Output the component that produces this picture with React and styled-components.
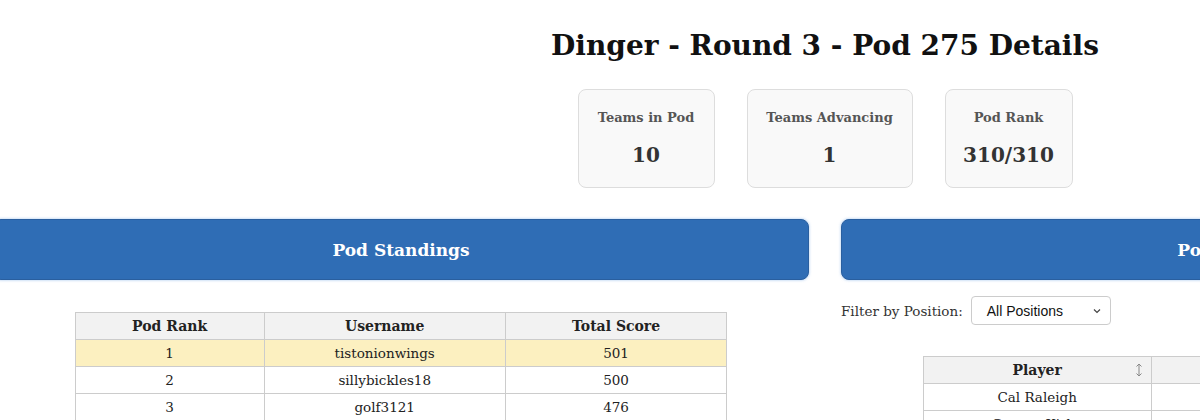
import React from "react";
import styled, {createGlobalStyle} from "styled-components";

const GlobalStyle = createGlobalStyle`
  body {
    margin: 0;
    background: #fff;
    font-family: "DejaVu Serif", Georgia, serif;
    color: #222;
    overflow: hidden;
  }
`;

const Page = styled.div`
  width: 1664px;
  margin-left: -7px;
  padding-top: 26px;
`;

const Title = styled.h1`
  margin: 0;
  text-align: center;
  font-size: 28px;
  line-height: 40px;
  font-weight: bold;
  color: #111;
`;

const Stats = styled.div`
  display: flex;
  justify-content: center;
  gap: 32px;
  margin-top: 23px;
`;

const StatCard = styled.div`
  width: ${(p) => p.$width}px;
  box-sizing: border-box;
  padding: 18px 0;
  background: #f9f9f9;
  border: 1px solid #ddd;
  border-radius: 8px;
  text-align: center;
`;

const StatLabel = styled.div`
  font-size: 13px;
  line-height: 20px;
  font-weight: bold;
  color: #555;
`;

const StatValue = styled.div`
  margin-top: 13px;
  font-size: 20px;
  line-height: 28px;
  font-weight: bold;
  color: #333;
`;

const Columns = styled.div`
  display: grid;
  grid-template-columns: 1fr 1fr;
  gap: 32px;
  margin-top: 31px;
`;

const Column = styled.section`
  display: flex;
  flex-direction: column;
`;

const PanelHeader = styled.div`
  height: 61px;
  box-sizing: border-box;
  display: flex;
  align-items: center;
  justify-content: center;
  background: #2f6db5;
  border: 1px solid #2a5f9f;
  border-radius: 8px;
  box-shadow: 0 0 3px rgba(120, 170, 230, 0.7);
  color: #fff;
  font-size: 17px;
  font-weight: bold;
`;

const FilterRow = styled.div`
  display: flex;
  align-items: center;
  gap: 8px;
  margin-top: 16px;
  font-size: 13.5px;
  color: #333;
`;

const Select = styled.div`
  width: 140px;
  height: 29px;
  box-sizing: border-box;
  display: flex;
  align-items: center;
  justify-content: space-between;
  padding: 0 8px 0 15px;
  border: 1px solid #ccc;
  border-radius: 4px;
  background: #fff;
  font-family: "Liberation Sans", Arial, sans-serif;
  font-size: 14px;
  color: #111;
`;

const Table = styled.table`
  width: ${(p) => p.$width};
  margin: ${(p) => p.$top}px auto 0;
  border-collapse: collapse;
  font-family: "DejaVu Serif", Georgia, serif;
  font-size: 14px;
`;

const Th = styled.th`
  position: relative;
  width: ${(p) => p.$w || "auto"};
  height: 26px;
  padding: 0 8px;
  background: #f2f2f2;
  border: 1px solid #ccc;
  font-weight: bold;
  color: #222;
  text-align: center;
`;

const Td = styled.td`
  height: 26px;
  padding: 0 8px;
  border: 1px solid #ccc;
  text-align: center;
  color: #222;
  font-family: "DejaVu Serif", Georgia, serif;
  font-size: 13.5px;
`;

const Tr = styled.tr`
  background: ${(p) => (p.$highlight ? "#fcf0c0" : "#fff")};
`;

const SortIcon = styled.span`
  position: absolute;
  right: 8px;
  top: 50%;
  transform: translateY(-50%);
  display: flex;
  color: #888;
`;

const standings = [
  {rank: 1, user: "tistonionwings", score: 501},
  {rank: 2, user: "sillybickles18", score: 500},
  {rank: 3, user: "golf3121", score: 476},
  {rank: 4, user: "kylematt", score: 470},
];

const players = [
  {name: "Cal Raleigh", pos: "C"},
  {name: "Cooper Kirby", pos: "P"},
];

const Chevron = () => (
  <svg width="10" height="10" viewBox="0 0 10 10" fill="none" stroke="#444" strokeWidth="1.2">
    <path d="M2 3.5 L5 6.5 L8 3.5" />
  </svg>
);

const UpDown = () => (
  <svg width="8" height="16" viewBox="0 0 8 16" fill="none" stroke="#888" strokeWidth="1">
    <path d="M4 2 V14 M1.5 4.5 L4 2 L6.5 4.5 M1.5 11.5 L4 14 L6.5 11.5" />
  </svg>
);

export default function App() {
  return (
    <>
      <GlobalStyle />
      <Page>
        <Title>Dinger - Round 3 - Pod 275 Details</Title>
        <Stats>
          <StatCard $width={137}>
            <StatLabel>Teams in Pod</StatLabel>
            <StatValue>10</StatValue>
          </StatCard>
          <StatCard $width={166}>
            <StatLabel>Teams Advancing</StatLabel>
            <StatValue>1</StatValue>
          </StatCard>
          <StatCard $width={128}>
            <StatLabel>Pod Rank</StatLabel>
            <StatValue>310/310</StatValue>
          </StatCard>
        </Stats>
        <Columns>
          <Column>
            <PanelHeader>Pod Standings</PanelHeader>
            <Table $width="80%" $top={32}>
              <thead>
                <tr>
                  <Th $w="29%">Pod Rank</Th>
                  <Th $w="37%">Username</Th>
                  <Th>Total Score</Th>
                </tr>
              </thead>
              <tbody>
                {standings.map((s) => (
                  <Tr key={s.rank} $highlight={s.rank === 1}>
                    <Td>{s.rank}</Td>
                    <Td>{s.user}</Td>
                    <Td>{s.score}</Td>
                  </Tr>
                ))}
              </tbody>
            </Table>
          </Column>
          <Column>
            <PanelHeader>Pod Ownership</PanelHeader>
            <FilterRow>
              <span>Filter by Position:</span>
              <Select>
                <span>All Positions</span>
                <Chevron />
              </Select>
            </FilterRow>
            <Table $width="80%" $top={31}>
              <thead>
                <tr>
                  <Th $w="35%">
                    Player
                    <SortIcon>
                      <UpDown />
                    </SortIcon>
                  </Th>
                  <Th>Position</Th>
                  <Th>Usage</Th>
                </tr>
              </thead>
              <tbody>
                {players.map((p) => (
                  <Tr key={p.name}>
                    <Td>{p.name}</Td>
                    <Td>{p.pos}</Td>
                    <Td>90%</Td>
                  </Tr>
                ))}
              </tbody>
            </Table>
          </Column>
        </Columns>
      </Page>
    </>
  );
}
